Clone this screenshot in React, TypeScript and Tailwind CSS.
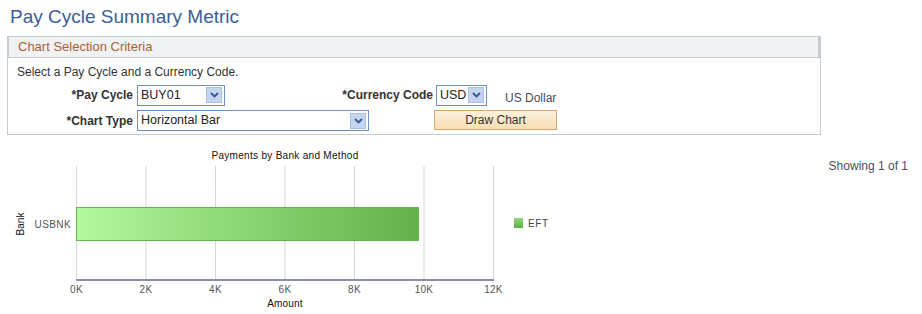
import React from 'react';

const ticks = ['0K', '2K', '4K', '6K', '8K', '10K', '12K'];

function Select({ value, width }: { value: string; width: string }) {
  return (
    <div
      className={`${width} h-[21px] border border-[#6f8fbd] bg-white flex items-center justify-between pl-[3px] pr-[2px]`}
    >
      <span className="text-[12.5px] text-[#222] leading-none">{value}</span>
      <span className="w-[16px] h-[16px] shrink-0 bg-[#c3d5ef] border border-[#aac1e3] flex items-center justify-center">
        <svg width="9" height="6" viewBox="0 0 9 6">
          <path d="M1 1 L4.5 4.5 L8 1" fill="none" stroke="#34598f" strokeWidth="1.8" />
        </svg>
      </span>
    </div>
  );
}

function Chart() {
  const x0 = 76.5;
  const step = 69.5;
  return (
    <svg width="560" height="174" viewBox="0 0 560 174" style={{ fontFamily: '"Liberation Sans", Arial, sans-serif' }}>
      <defs>
        <linearGradient id="bar" x1="0" x2="1" y1="0" y2="0">
          <stop offset="0%" stopColor="#b2f89e" />
          <stop offset="100%" stopColor="#63b149" />
        </linearGradient>
        <linearGradient id="leg" x1="0" x2="0" y1="0" y2="1">
          <stop offset="0%" stopColor="#8fd77a" />
          <stop offset="100%" stopColor="#5fae47" />
        </linearGradient>
      </defs>
      <text x="285" y="19" textAnchor="middle" fontSize="10" fill="#111" letterSpacing="0.3">
        Payments by Bank and Method
      </text>
      {ticks.map((t, i) => (
        <line key={t} x1={x0 + i * step} x2={x0 + i * step} y1="26" y2="140" stroke="#d6d6df" strokeWidth="1" />
      ))}
      <rect x="76.5" y="67.5" width="342" height="33" fill="url(#bar)" stroke="#5db545" strokeWidth="1" />
      <line x1="76" x2="494" y1="140" y2="140" stroke="#8a8ea8" strokeWidth="2" />
      {ticks.map((t, i) => (
        <text key={t} x={x0 + i * step} y="153" textAnchor="middle" fontSize="10" fill="#555" letterSpacing="0.3">
          {t}
        </text>
      ))}
      <text x="71" y="88" textAnchor="end" fontSize="10" fill="#555" letterSpacing="0.4">
        USBNK
      </text>
      <text x="24" y="84" textAnchor="middle" fontSize="10" fill="#111" transform="rotate(-90 24 84)">
        Bank
      </text>
      <text x="285" y="167" textAnchor="middle" fontSize="10" fill="#111" letterSpacing="0.2">
        Amount
      </text>
      <rect x="514" y="78" width="9" height="10" fill="url(#leg)" />
      <text x="528" y="87" fontSize="10" fill="#444" letterSpacing="0.6">
        EFT
      </text>
    </svg>
  );
}

export default function App() {
  return (
    <div className="w-[922px] h-[314px] bg-white overflow-hidden font-['Liberation_Sans',Arial,sans-serif]">
      <h1 className="pl-[10px] pt-[6px] text-[19px] leading-[22px] text-[#3b5e98]">Pay Cycle Summary Metric</h1>

      <div className="mt-[8px] ml-[7px] w-[814px] h-[99px] border border-[#c8ccd1]">
        <div className="h-[21px] bg-[#eff3f4] border-b border-[#c8ccd1] border-l border-r-[2px] pl-[9px] flex items-center">
          <span className="text-[13px] text-[#b0602e]">Chart Selection Criteria</span>
        </div>
        <div className="pl-[9px] pt-[7px] text-[12px] leading-[14px] text-[#333]">Select a Pay Cycle and a Currency Code.</div>

        <div className="mt-[4px] flex items-center">
          <div className="w-[125px] text-right text-[12px] font-bold text-[#333]">*Pay Cycle</div>
          <div className="ml-[4px]">
            <Select value="BUY01" width="w-[88px]" />
          </div>
          <div className="w-[208px] text-right text-[12px] font-bold text-[#333]">*Currency Code</div>
          <div className="ml-[3px]">
            <Select value="USD" width="w-[51px]" />
          </div>
          <div className="ml-[18px] mt-[6px] text-[12px] text-[#4a4a5a]">US Dollar</div>
        </div>

        <div className="mt-[3px] flex items-center">
          <div className="w-[125px] text-right text-[12px] font-bold text-[#333]">*Chart Type</div>
          <div className="ml-[4px]">
            <Select value="Horizontal Bar" width="w-[232px]" />
          </div>
          <button className="ml-[65px] -mt-[2px] w-[123px] h-[20px] border border-[#d9a770] bg-[linear-gradient(#fdf1db,#f9deb4)] text-[12px] text-[#333]">
            Draw Chart
          </button>
        </div>
      </div>

      <div className="mt-[5px] flex">
        <Chart />
        <div className="flex-1 text-right pr-[14px] pt-[17px] text-[12px] text-[#4d4d5c]">Showing 1 of 1</div>
      </div>
    </div>
  );
}
